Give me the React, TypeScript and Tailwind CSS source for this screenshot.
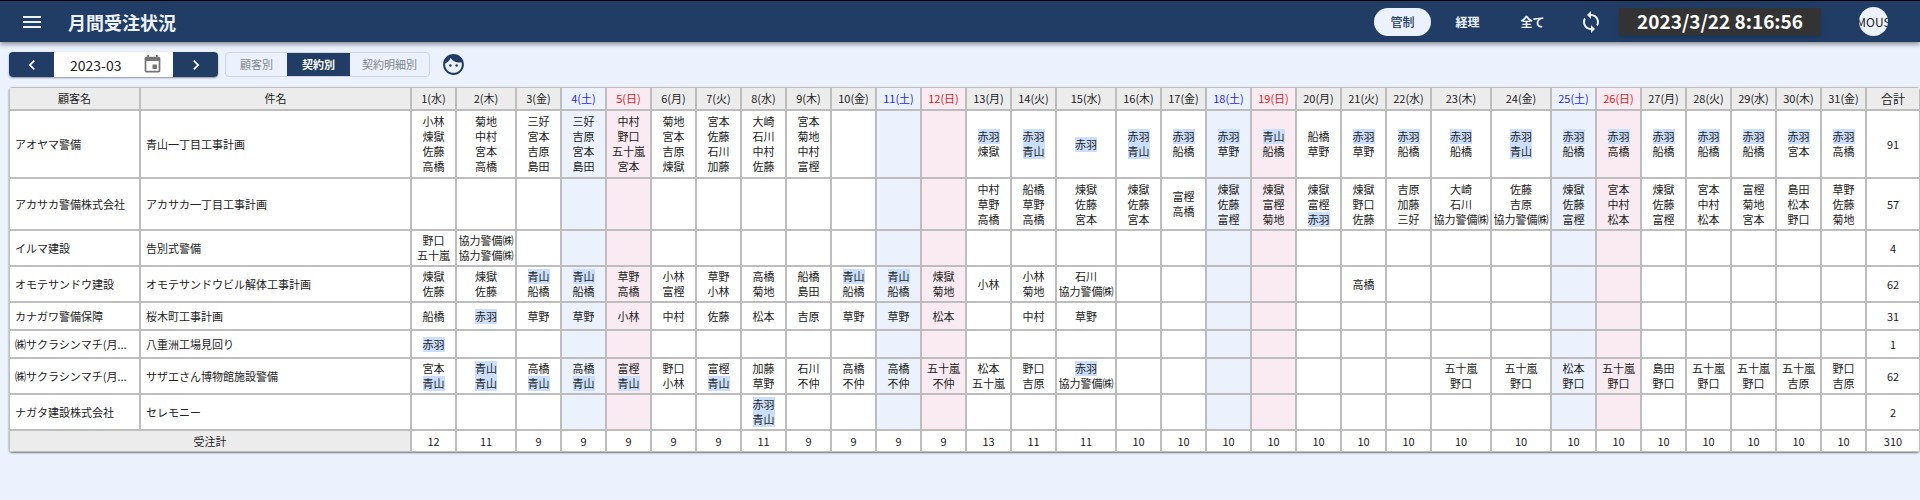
import { MdChevronLeft, MdChevronRight, MdEvent, MdFace, MdMenu, MdSync } from "react-icons/md";

type Contract = {
  customer: string;
  title: string;
  // day of month -> assigned names, separated by spaces
  days: Record<number, string>;
  total: number;
};

const WEEKDAYS = ["水", "木", "金", "土", "日", "月", "火"];
const WIDE_DAYS = [2, 15, 23, 24];
const MARKED = ["赤羽", "青山"];

// row height by the largest number of names in one day
const ROW_HEIGHTS = ["h-7", "h-7", "h-9", "h-[52px]", "h-[68px]"];

const days = Array.from({ length: 31 }, (_, i) => ({ day: i + 1, weekday: WEEKDAYS[i % 7] }));

const contracts: Contract[] = [
  {
    customer: "アオヤマ警備",
    title: "青山一丁目工事計画",
    days: {
      1: "小林 煉獄 佐藤 高橋",
      2: "菊地 中村 宮本 高橋",
      3: "三好 宮本 吉原 島田",
      4: "三好 吉原 宮本 島田",
      5: "中村 野口 五十嵐 宮本",
      6: "菊地 宮本 吉原 煉獄",
      7: "宮本 佐藤 石川 加藤",
      8: "大崎 石川 中村 佐藤",
      9: "宮本 菊地 中村 富樫",
      13: "赤羽 煉獄",
      14: "赤羽 青山",
      15: "赤羽",
      16: "赤羽 青山",
      17: "赤羽 船橋",
      18: "赤羽 草野",
      19: "青山 船橋",
      20: "船橋 草野",
      21: "赤羽 草野",
      22: "赤羽 船橋",
      23: "赤羽 船橋",
      24: "赤羽 青山",
      25: "赤羽 船橋",
      26: "赤羽 高橋",
      27: "赤羽 船橋",
      28: "赤羽 船橋",
      29: "赤羽 船橋",
      30: "赤羽 宮本",
      31: "赤羽 高橋",
    },
    total: 91,
  },
  {
    customer: "アカサカ警備株式会社",
    title: "アカサカ一丁目工事計画",
    days: {
      13: "中村 草野 高橋",
      14: "船橋 草野 高橋",
      15: "煉獄 佐藤 宮本",
      16: "煉獄 佐藤 宮本",
      17: "富樫 高橋",
      18: "煉獄 佐藤 富樫",
      19: "煉獄 富樫 菊地",
      20: "煉獄 富樫 赤羽",
      21: "煉獄 野口 佐藤",
      22: "吉原 加藤 三好",
      23: "大崎 石川 協力警備㈱",
      24: "佐藤 吉原 協力警備㈱",
      25: "煉獄 佐藤 富樫",
      26: "宮本 中村 松本",
      27: "煉獄 佐藤 富樫",
      28: "宮本 中村 松本",
      29: "富樫 菊地 宮本",
      30: "島田 松本 野口",
      31: "草野 佐藤 菊地",
    },
    total: 57,
  },
  {
    customer: "イルマ建設",
    title: "告別式警備",
    days: { 1: "野口 五十嵐", 2: "協力警備㈱ 協力警備㈱" },
    total: 4,
  },
  {
    customer: "オモテサンドウ建設",
    title: "オモテサンドウビル解体工事計画",
    days: {
      1: "煉獄 佐藤",
      2: "煉獄 佐藤",
      3: "青山 船橋",
      4: "青山 船橋",
      5: "草野 高橋",
      6: "小林 富樫",
      7: "草野 小林",
      8: "高橋 菊地",
      9: "船橋 島田",
      10: "青山 船橋",
      11: "青山 船橋",
      12: "煉獄 菊地",
      13: "小林",
      14: "小林 菊地",
      15: "石川 協力警備㈱",
      21: "高橋",
    },
    total: 62,
  },
  {
    customer: "カナガワ警備保障",
    title: "桜木町工事計画",
    days: {
      1: "船橋",
      2: "赤羽",
      3: "草野",
      4: "草野",
      5: "小林",
      6: "中村",
      7: "佐藤",
      8: "松本",
      9: "吉原",
      10: "草野",
      11: "草野",
      12: "松本",
      14: "中村",
      15: "草野",
    },
    total: 31,
  },
  {
    customer: "㈱サクラシンマチ(月...",
    title: "八重洲工場見回り",
    days: { 1: "赤羽" },
    total: 1,
  },
  {
    customer: "㈱サクラシンマチ(月...",
    title: "サザエさん博物館施設警備",
    days: {
      1: "宮本 青山",
      2: "青山 青山",
      3: "高橋 青山",
      4: "高橋 青山",
      5: "富樫 青山",
      6: "野口 小林",
      7: "富樫 青山",
      8: "加藤 草野",
      9: "石川 不仲",
      10: "高橋 不仲",
      11: "高橋 不仲",
      12: "五十嵐 不仲",
      13: "松本 五十嵐",
      14: "野口 吉原",
      15: "赤羽 協力警備㈱",
      23: "五十嵐 野口",
      24: "五十嵐 野口",
      25: "松本 野口",
      26: "五十嵐 野口",
      27: "島田 野口",
      28: "五十嵐 野口",
      29: "五十嵐 野口",
      30: "五十嵐 吉原",
      31: "野口 吉原",
    },
    total: 62,
  },
  {
    customer: "ナガタ建設株式会社",
    title: "セレモニー",
    days: { 8: "赤羽 青山" },
    total: 2,
  },
];

const dayTotals = [
  12, 11, 9, 9, 9, 9, 9, 11, 9, 9, 9, 9, 13, 11, 11, 10, 10, 10, 10, 10, 10, 10, 10, 10, 10, 10, 10, 10, 10, 10, 10,
];

function headTone(weekday: string) {
  if (weekday === "土") return "bg-[#ebf2fe] text-[#2a1ff0]";
  if (weekday === "日") return "bg-[#faeaf1] text-[#e02020]";
  return "bg-[#ececec]";
}

function cellTone(weekday: string) {
  if (weekday === "土") return "bg-[#ebf2fe]";
  if (weekday === "日") return "bg-[#faeaf1]";
  return "bg-white";
}

function rowHeight(contract: Contract) {
  const lines = Object.values(contract.days).map((names) => names.split(" ").length);
  return ROW_HEIGHTS[Math.max(...lines)];
}

function Header() {
  return (
    <header className="relative flex h-[42px] items-center border-t border-black bg-[#213d65] pl-5 pr-8 text-[#ebf2fe] shadow-[0_2px_5px_rgba(0,0,0,0.45)]">
      <button type="button" aria-label="メニュー">
        <MdMenu className="size-6" />
      </button>
      <h1 className="ml-6 text-lg font-bold">月間受注状況</h1>
      <nav className="ml-auto flex gap-2 text-xs font-bold">
        <button type="button" className="h-7 w-[57px] rounded-full bg-[#ebf2fe] font-medium text-[#213d65]">管制</button>
        <button type="button" className="h-7 w-[57px] rounded-full">経理</button>
        <button type="button" className="h-7 w-[57px] rounded-full">全て</button>
      </nav>
      <button type="button" aria-label="更新" className="ml-[18px]">
        <MdSync className="size-6" />
      </button>
      <time className="ml-4 flex h-[27px] w-[202px] items-center justify-center bg-[#333] text-[19px] font-bold text-white shadow-md">
        2023/3/22 8:16:56
      </time>
      <div className="ml-[38px] flex size-[29px] items-center justify-center overflow-hidden rounded-full bg-[#ebf2fe] text-xs text-[#222]">
        MOUS
      </div>
    </header>
  );
}

function Toolbar() {
  return (
    <div className="flex items-center pl-[9px] pt-[10px]">
      <div className="flex h-[25px] overflow-hidden rounded-sm bg-white shadow-[0_1px_2px_rgba(0,0,0,0.4)]">
        <button type="button" aria-label="前月" className="flex w-[45px] items-center justify-center bg-[#213d65] text-white">
          <MdChevronLeft className="size-5" />
        </button>
        <label className="flex w-[119px] items-center justify-between pl-4 pr-[10px]">
          <input type="text" aria-label="対象月" defaultValue="2023-03" className="w-[60px] text-sm text-[#222] outline-none" />
          <MdEvent className="size-[21px] text-[#757575]" />
        </label>
        <button type="button" aria-label="翌月" className="flex w-[45px] items-center justify-center bg-[#213d65] text-white">
          <MdChevronRight className="size-5" />
        </button>
      </div>

      <div className="ml-[7px] flex h-[25px] overflow-hidden rounded-sm border border-[#d0d6e2] text-[11px] text-[#808590]">
        <button type="button" className="w-[61px]">顧客別</button>
        <button type="button" className="-my-px w-[63px] bg-[#213d65] font-bold text-white">契約別</button>
        <button type="button" className="w-[79px]">契約明細別</button>
      </div>

      <button type="button" aria-label="担当者" className="ml-[11px] text-[#213d65]">
        <MdFace className="size-[25px]" />
      </button>
    </div>
  );
}

function OrderTable() {
  return (
    <div className="ml-[9px] mt-[10px] overflow-hidden rounded-sm shadow-[0_1px_2px_rgba(0,0,0,0.5)]">
      <table className="w-full table-fixed border-separate border-spacing-0 text-center text-[11px] leading-[15px] [&_td]:border [&_td]:border-[#bdbdbd] [&_th]:border [&_th]:border-[#bdbdbd] [&_th]:font-normal">
        <colgroup>
          <col className="w-[131px]" />
          <col />
          {days.map(({ day }) => (
            <col key={day} className={WIDE_DAYS.includes(day) ? "w-[60px]" : "w-[45px]"} />
          ))}
          <col className="w-[54px]" />
        </colgroup>
        <thead>
          <tr className="h-[23px]">
            <th className="bg-[#ececec]">顧客名</th>
            <th className="bg-[#ececec]">件名</th>
            {days.map(({ day, weekday }) => (
              <th key={day} className={headTone(weekday)}>
                {day}({weekday})
              </th>
            ))}
            <th className="bg-[#ececec] text-xs">合計</th>
          </tr>
        </thead>
        <tbody>
          {contracts.map((contract, i) => (
            <tr key={i} className={rowHeight(contract)}>
              <td className="truncate bg-white pl-[5px] text-left">{contract.customer}</td>
              <td className="truncate bg-white pl-[5px] text-left">{contract.title}</td>
              {days.map(({ day, weekday }) => (
                <td key={day} className={`whitespace-nowrap ${cellTone(weekday)}`}>
                  {contract.days[day]?.split(" ").map((name, j) => (
                    <div key={j} className={`mx-auto w-fit ${MARKED.includes(name) ? "bg-[#cbdffc]" : ""}`}>
                      {name}
                    </div>
                  ))}
                </td>
              ))}
              <td className="bg-white">{contract.total}</td>
            </tr>
          ))}
        </tbody>
        <tfoot>
          <tr className="h-[22px]">
            <th colSpan={2} className="bg-[#ececec]">受注計</th>
            {dayTotals.map((total, i) => (
              <td key={i} className="bg-white">{total}</td>
            ))}
            <td className="bg-white">310</td>
          </tr>
        </tfoot>
      </table>
    </div>
  );
}

export default function App() {
  return (
    <div className="min-h-screen bg-[#ebf2fe] font-['Noto_Sans_CJK_JP',sans-serif] text-[#222]">
      <Header />
      <main>
        <Toolbar />
        <OrderTable />
      </main>
    </div>
  );
}
